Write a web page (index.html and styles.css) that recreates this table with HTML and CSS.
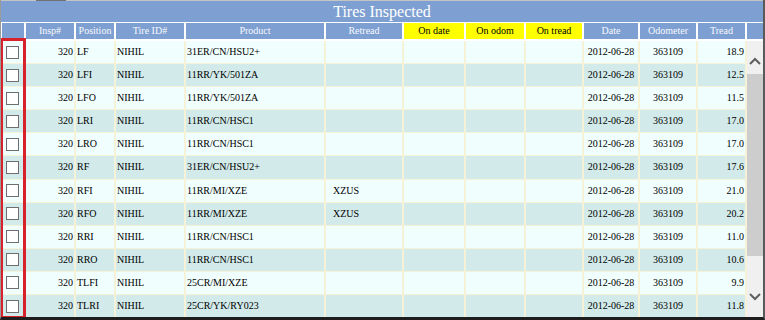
FILE: index.html
```html
<!DOCTYPE html>
<html>
<head>
<meta charset="utf-8">
<link rel="stylesheet" href="styles.css">
</head>
<body>
<div class="frame">
  <div class="topline"><span class="topmark"></span></div>
  <div class="title">Tires Inspected</div>
  <div class="head">
    <div class="hc"></div>
    <div class="hc">Insp#</div>
    <div class="hc">Position</div>
    <div class="hc">Tire ID#</div>
    <div class="hc">Product</div>
    <div class="hc">Retread</div>
    <div class="hc yellow">On date</div>
    <div class="hc yellow">On odom</div>
    <div class="hc yellow">On tread</div>
    <div class="hc">Date</div>
    <div class="hc">Odometer</div>
    <div class="hc">Tread</div>
    <div class="hc"></div>
  </div>
  <div class="bodywrap">
    <div class="rows">
      <div class="row odd"><div class="c cb"><span class="box"></span></div><div class="c r">320</div><div class="c">LF</div><div class="c">NIHIL</div><div class="c">31ER/CN/HSU2+</div><div class="c rt"></div><div class="c"></div><div class="c"></div><div class="c"></div><div class="c ctr">2012-06-28</div><div class="c ctr">363109</div><div class="c r">18.9</div></div>
      <div class="row even"><div class="c cb"><span class="box"></span></div><div class="c r">320</div><div class="c">LFI</div><div class="c">NIHIL</div><div class="c">11RR/YK/501ZA</div><div class="c rt"></div><div class="c"></div><div class="c"></div><div class="c"></div><div class="c ctr">2012-06-28</div><div class="c ctr">363109</div><div class="c r">12.5</div></div>
      <div class="row odd"><div class="c cb"><span class="box"></span></div><div class="c r">320</div><div class="c">LFO</div><div class="c">NIHIL</div><div class="c">11RR/YK/501ZA</div><div class="c rt"></div><div class="c"></div><div class="c"></div><div class="c"></div><div class="c ctr">2012-06-28</div><div class="c ctr">363109</div><div class="c r">11.5</div></div>
      <div class="row even"><div class="c cb"><span class="box"></span></div><div class="c r">320</div><div class="c">LRI</div><div class="c">NIHIL</div><div class="c">11RR/CN/HSC1</div><div class="c rt"></div><div class="c"></div><div class="c"></div><div class="c"></div><div class="c ctr">2012-06-28</div><div class="c ctr">363109</div><div class="c r">17.0</div></div>
      <div class="row odd"><div class="c cb"><span class="box"></span></div><div class="c r">320</div><div class="c">LRO</div><div class="c">NIHIL</div><div class="c">11RR/CN/HSC1</div><div class="c rt"></div><div class="c"></div><div class="c"></div><div class="c"></div><div class="c ctr">2012-06-28</div><div class="c ctr">363109</div><div class="c r">17.0</div></div>
      <div class="row even"><div class="c cb"><span class="box"></span></div><div class="c r">320</div><div class="c">RF</div><div class="c">NIHIL</div><div class="c">31ER/CN/HSU2+</div><div class="c rt"></div><div class="c"></div><div class="c"></div><div class="c"></div><div class="c ctr">2012-06-28</div><div class="c ctr">363109</div><div class="c r">17.6</div></div>
      <div class="row odd"><div class="c cb"><span class="box"></span></div><div class="c r">320</div><div class="c">RFI</div><div class="c">NIHIL</div><div class="c">11RR/MI/XZE</div><div class="c rt">XZUS</div><div class="c"></div><div class="c"></div><div class="c"></div><div class="c ctr">2012-06-28</div><div class="c ctr">363109</div><div class="c r">21.0</div></div>
      <div class="row even"><div class="c cb"><span class="box"></span></div><div class="c r">320</div><div class="c">RFO</div><div class="c">NIHIL</div><div class="c">11RR/MI/XZE</div><div class="c rt">XZUS</div><div class="c"></div><div class="c"></div><div class="c"></div><div class="c ctr">2012-06-28</div><div class="c ctr">363109</div><div class="c r">20.2</div></div>
      <div class="row odd"><div class="c cb"><span class="box"></span></div><div class="c r">320</div><div class="c">RRI</div><div class="c">NIHIL</div><div class="c">11RR/CN/HSC1</div><div class="c rt"></div><div class="c"></div><div class="c"></div><div class="c"></div><div class="c ctr">2012-06-28</div><div class="c ctr">363109</div><div class="c r">11.0</div></div>
      <div class="row even"><div class="c cb"><span class="box"></span></div><div class="c r">320</div><div class="c">RRO</div><div class="c">NIHIL</div><div class="c">11RR/CN/HSC1</div><div class="c rt"></div><div class="c"></div><div class="c"></div><div class="c"></div><div class="c ctr">2012-06-28</div><div class="c ctr">363109</div><div class="c r">10.6</div></div>
      <div class="row odd"><div class="c cb"><span class="box"></span></div><div class="c r">320</div><div class="c">TLFI</div><div class="c">NIHIL</div><div class="c">25CR/MI/XZE</div><div class="c rt"></div><div class="c"></div><div class="c"></div><div class="c"></div><div class="c ctr">2012-06-28</div><div class="c ctr">363109</div><div class="c r">9.9</div></div>
      <div class="row even"><div class="c cb"><span class="box"></span></div><div class="c r">320</div><div class="c">TLRI</div><div class="c">NIHIL</div><div class="c">25CR/YK/RY023</div><div class="c rt"></div><div class="c"></div><div class="c"></div><div class="c"></div><div class="c ctr">2012-06-28</div><div class="c ctr">363109</div><div class="c r">11.8</div></div>
    </div>
    <div class="scrollbar">
      <svg class="arrow up" width="12" height="8" viewBox="0 0 12 8"><path d="M1 7 L6 2 L11 7" fill="none" stroke="#5f5f5f" stroke-width="2"/></svg>
      <div class="thumb"></div>
      <div class="spacer"></div>
      <svg class="arrow down" width="12" height="8" viewBox="0 0 12 8"><path d="M1 1 L6 6 L11 1" fill="none" stroke="#5f5f5f" stroke-width="2"/></svg>
    </div>
  </div>
  <div class="highlight"></div>
</div>
</body>
</html>
```
FILE: styles.css
```css
html, body {
  margin: 0;
  padding: 0;
  background: #ffffff;
}
.frame {
  position: relative;
  width: 762px;
  height: 317px;
  border-left: 1px solid #9a9a9a;
  border-right: 2px solid #5a5a5a;
  border-bottom: 3px solid #1e1e1e;
  font-family: "Liberation Serif", "Times New Roman", serif;
  font-size: 10px;
  background: #ffffff;
  display: flex;
  flex-direction: column;
  overflow: hidden;
}
.topline {
  height: 1px;
  flex: none;
  background: #c4c4c4;
  display: flex;
}
.topmark {
  margin-left: 35px;
  width: 30px;
  background: #707070;
}
.title {
  height: 21px;
  flex: none;
  line-height: 21px;
  background: #7e9fd1;
  color: #ffffff;
  font-size: 16px;
  text-align: center;
}
.head {
  display: grid;
  flex: none;
  grid-template-columns: 22px 48px 38px 68px 138px 76px 60px 58px 56px 54px 56px 47px 16px;
  column-gap: 2px;
  padding: 1px 0 2px 1px;
  background: #ffffff;
}
.hc {
  height: 16px;
  line-height: 16px;
  background: #7e9fd1;
  color: #f7f9fd;
  text-align: center;
  white-space: nowrap;
  overflow: hidden;
}
.hc.yellow {
  background: #ffff00;
  color: #000000;
}
.bodywrap {
  flex: 1;
  min-height: 0;
  overflow: hidden;
  display: flex;
  column-gap: 2px;
  padding-left: 1px;
  background: #f6f2d8;
}
.rows {
  display: flex;
  flex-direction: column;
  row-gap: 1px;
}
.row {
  display: grid;
  flex: none;
  grid-template-columns: 22px 48px 38px 68px 138px 76px 60px 58px 56px 54px 56px 47px;
  column-gap: 2px;
  height: 22.1px;
}
.c {
  line-height: 22px;
  padding: 0 1px;
  color: #000000;
  white-space: nowrap;
  overflow: hidden;
}
.odd .c { background: #f0fefe; }
.even .c { background: #d2eaea; }
.c.r { text-align: right; }
.c.ctr { text-align: center; }
.c.rt { padding-left: 7px; }
.c.cb {
  display: flex;
  align-items: center;
  padding-left: 4px;
}
.box {
  width: 11px;
  height: 11px;
  border: 1px solid #6e6e6e;
  background: #ffffff;
}
.scrollbar {
  width: 16px;
  background: #f0f0f0;
  display: flex;
  flex-direction: column;
  align-items: center;
  padding-top: 16px;
  padding-bottom: 16px;
  box-sizing: border-box;
}
.thumb {
  width: 16px;
  height: 182px;
  margin-top: 9px;
  background: #cdcdcd;
}
.spacer {
  flex: 1;
}
.highlight {
  position: absolute;
  left: -1px;
  top: 38px;
  width: 20px;
  height: 275px;
  border: 3px solid #d7222c;
}
```
